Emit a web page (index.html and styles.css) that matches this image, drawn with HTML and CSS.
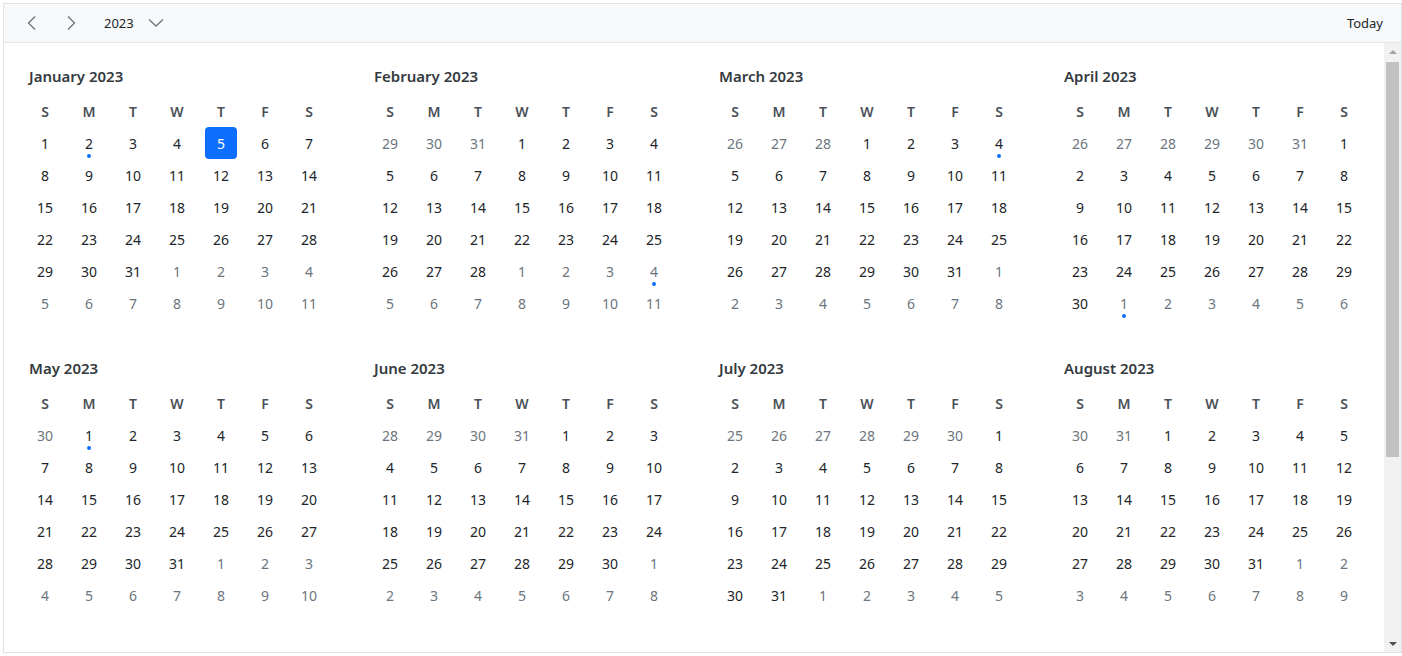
FILE: index.html
```html
<!DOCTYPE html>
<html lang="en">
<head>
    <meta charset="UTF-8">
    <meta name="viewport" content="width=device-width, initial-scale=1.0">
    <title>Year calendar</title>
    <link rel="stylesheet" href="styles.css">
</head>
<body>
    <div class="calendar">
        <div class="toolbar">
            <button class="icon-btn" title="Previous">
                <svg width="16" height="16" viewBox="0 0 16 16"><path d="M11 1.5 L4.5 8 L11 14.5" fill="none" stroke="#6c757d" stroke-width="1.3"/></svg>
            </button>
            <button class="icon-btn" title="Next">
                <svg width="16" height="16" viewBox="0 0 16 16"><path d="M5 1.5 L11.5 8 L5 14.5" fill="none" stroke="#6c757d" stroke-width="1.3"/></svg>
            </button>
            <button class="year-btn">
                <span>2023</span>
                <svg width="16" height="16" viewBox="0 0 16 16"><path d="M1 4.5 L8 11 L15 4.5" fill="none" stroke="#6c757d" stroke-width="1.3"/></svg>
            </button>
            <button class="today-btn">Today</button>
        </div>
        <div class="content">
            <div class="months" id="months"></div>
            <div class="scrollbar">
                <div class="arrow up"></div>
                <div class="track"><div class="thumb"></div></div>
                <div class="arrow down"></div>
            </div>
        </div>
    </div>

    <script src="app.js"></script>
</body>
</html>
```

FILE: styles.css
```css
* {
    box-sizing: border-box;
}
body {
    font-family: "Noto Sans", "Segoe UI", Arial, sans-serif;
    background-color: #ffffff;
    color: #212529;
    margin: 0;
}
.calendar {
    margin: 3px 0 0 3px;
    width: 1399px;
    height: 650px;
    border: 1px solid #dee2e6;
    display: flex;
    flex-direction: column;
}
.toolbar {
    height: 39px;
    flex-shrink: 0;
    display: flex;
    align-items: center;
    padding: 0 18px 0 16px;
    background-color: #f8f9fa;
    border-bottom: 1px solid #e3e6ea;
}
button {
    font-family: inherit;
    background: none;
    border: none;
    padding: 0;
    cursor: pointer;
    color: #212529;
}
.icon-btn {
    width: 24px;
    height: 28px;
    display: flex;
    align-items: center;
    justify-content: center;
    margin-right: 15px;
}
.year-btn {
    display: flex;
    align-items: center;
    gap: 14px;
    font-size: 13px;
    margin-left: 6px;
}
.today-btn {
    margin-left: auto;
    font-size: 13px;
}
.content {
    flex: 1;
    min-height: 0;
    display: flex;
}
.months {
    flex: 1;
    overflow: hidden;
    display: grid;
    grid-template-columns: repeat(4, 308px);
    column-gap: 37px;
    row-gap: 33px;
    padding: 17px 0 24px 19px;
    align-content: start;
}
.scrollbar {
    width: 17px;
    flex-shrink: 0;
    display: flex;
    flex-direction: column;
    background-color: #f1f1f1;
}
.arrow {
    height: 17px;
    display: flex;
    align-items: center;
    justify-content: center;
}
.arrow::before {
    content: "";
    border-left: 4px solid transparent;
    border-right: 4px solid transparent;
}
.arrow.up::before {
    border-bottom: 4px solid #a3a3a3;
}
.arrow.down::before {
    border-top: 4px solid #505050;
}
.track {
    flex: 1;
    padding: 2px 2px 0;
}
.thumb {
    height: 395px;
    background-color: #c1c1c1;
}
.month-title {
    height: 32px;
    line-height: 32px;
    margin: 0 0 3px;
    padding-left: 6px;
    font-size: 15px;
    font-weight: 600;
    color: #343a40;
}
.grid {
    display: grid;
    grid-template-columns: repeat(7, 44px);
    grid-auto-rows: 32px;
}
.weekday, .day {
    display: flex;
    align-items: center;
    justify-content: center;
    font-size: 14px;
}
.weekday {
    font-weight: 600;
    color: #495057;
}
.day {
    position: relative;
}
.day span {
    width: 32px;
    height: 32px;
    display: flex;
    align-items: center;
    justify-content: center;
    border-radius: 4px;
}
.day.other {
    color: #6c757d;
}
.day.selected span {
    background-color: #0d6efd;
    color: #ffffff;
}
.dot {
    position: absolute;
    left: 20px;
    top: 27px;
    width: 4px;
    height: 4px;
    border-radius: 50%;
    background-color: #0d6efd;
}
```

FILE: app.js
```js
const monthNames = ['January', 'February', 'March', 'April', 'May', 'June',
    'July', 'August', 'September', 'October', 'November', 'December'];
const weekdays = ['S', 'M', 'T', 'W', 'T', 'F', 'S'];
const year = 2023;
const events = ['2023-1-2', '2023-3-4', '2023-5-1'];
const selected = '2023-1-5';

const container = document.getElementById('months');

monthNames.forEach((name, m) => {
    const first = new Date(year, m, 1);
    let html = `<div class="month"><h3 class="month-title">${name} ${year}</h3><div class="grid">`;
    weekdays.forEach(w => { html += `<div class="weekday">${w}</div>`; });

    for (let i = 0; i < 42; i++) {
        const d = new Date(year, m, 1 - first.getDay() + i);
        const key = `${d.getFullYear()}-${d.getMonth() + 1}-${d.getDate()}`;
        let cls = 'day';
        if (d.getMonth() !== m) cls += ' other';
        if (key === selected && d.getMonth() === m) cls += ' selected';
        const dot = events.includes(key) ? '<i class="dot"></i>' : '';
        html += `<div class="${cls}"><span>${d.getDate()}</span>${dot}</div>`;
    }

    html += '</div></div>';
    container.insertAdjacentHTML('beforeend', html);
});
```
